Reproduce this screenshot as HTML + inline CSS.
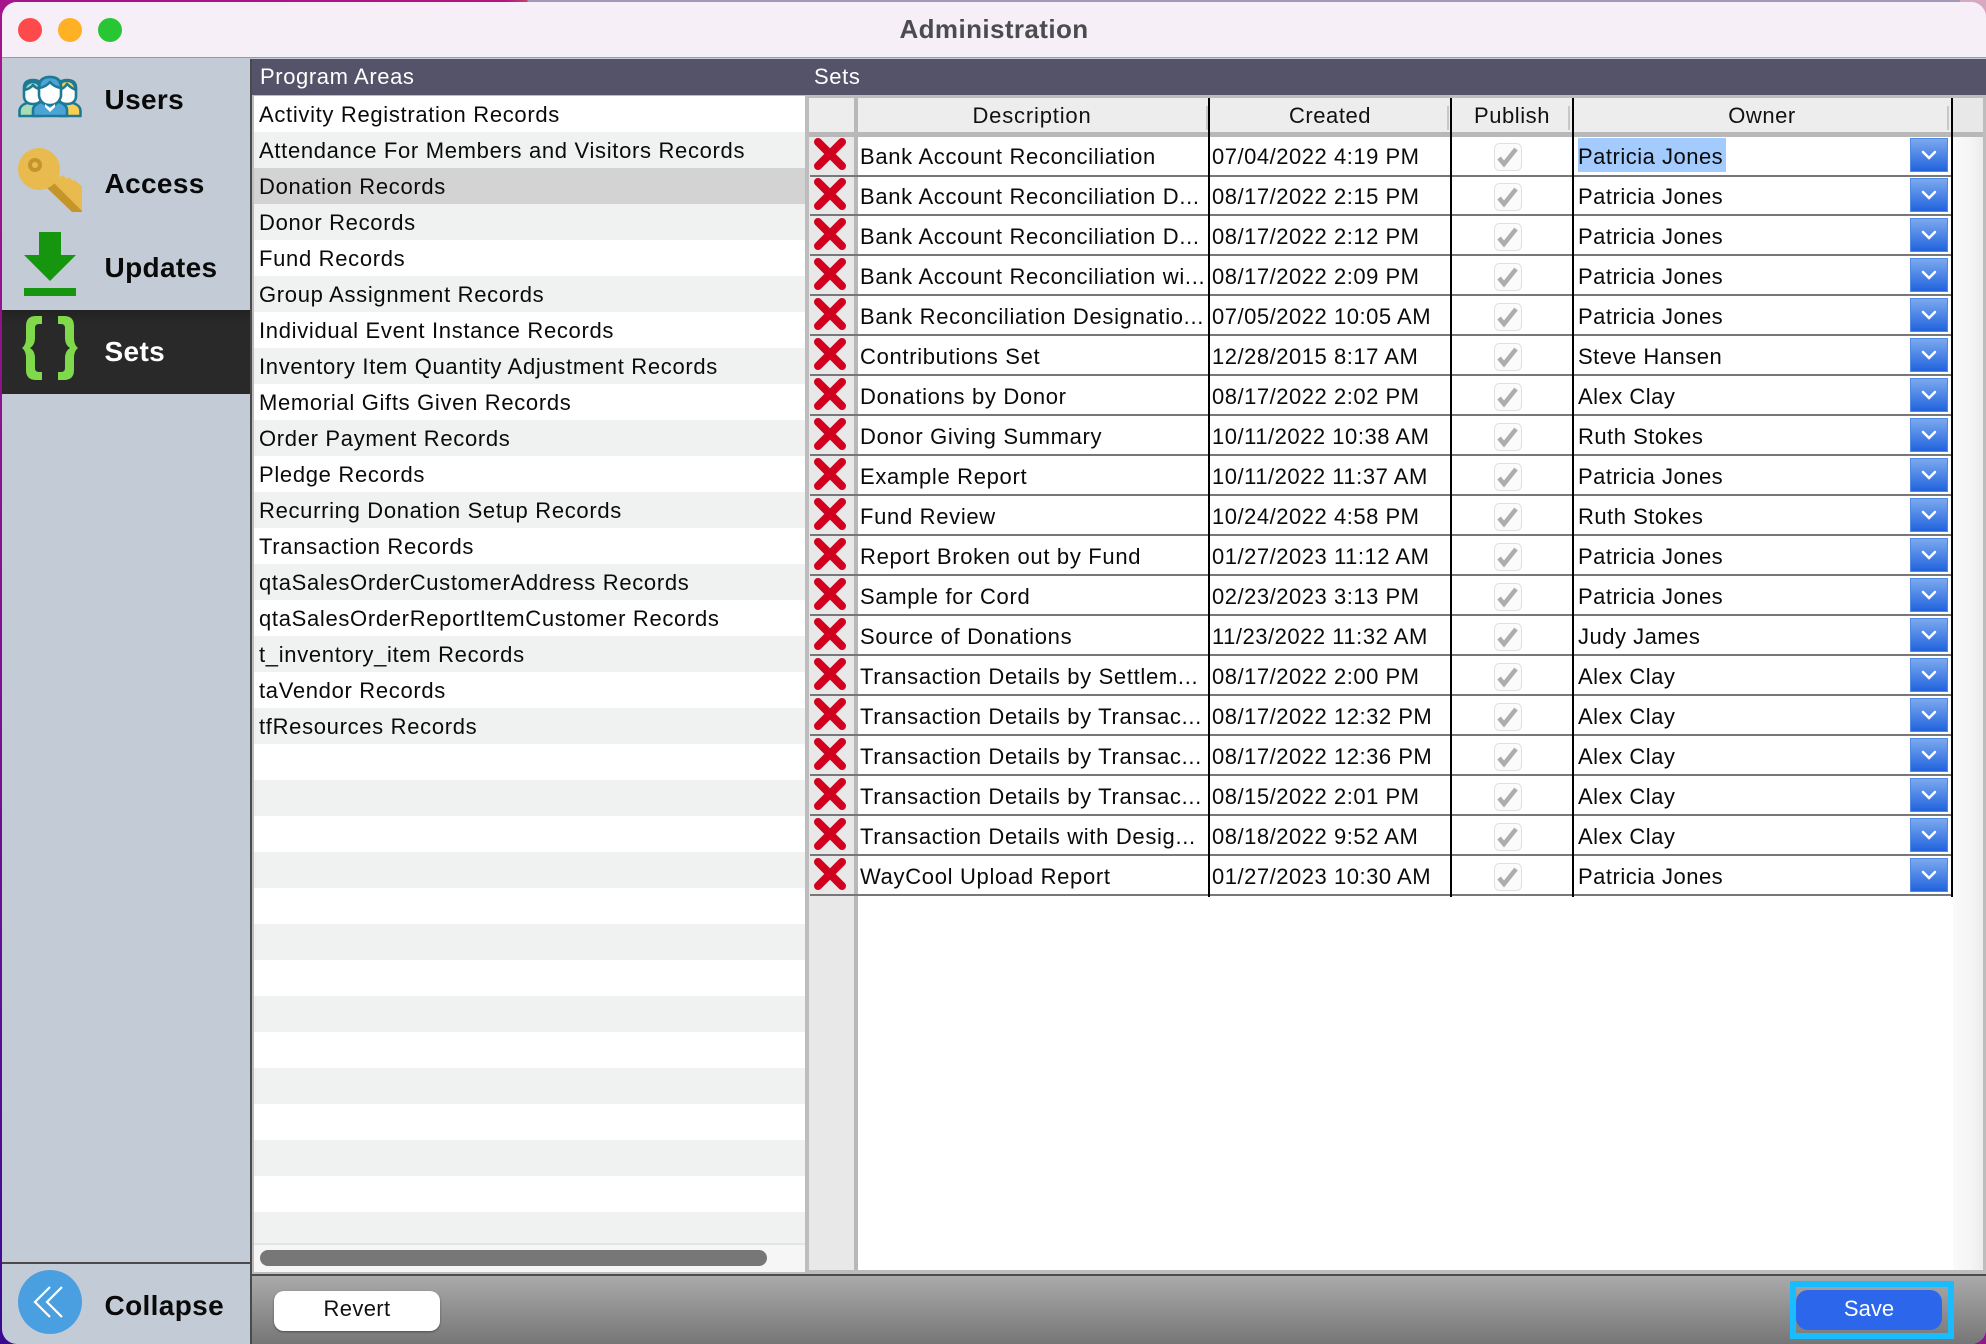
<!DOCTYPE html>
<html lang="en"><head><meta charset="utf-8"><title>Administration</title>
<style>
*{box-sizing:border-box}
html,body{margin:0;padding:0;width:1986px;height:1344px;overflow:hidden}
body{position:relative;font-family:"Liberation Sans",sans-serif;color:#0a0a0a;background:linear-gradient(180deg,#a5148a 0%,#7d1090 50%,#3a0a90 100%)}
.a{position:absolute}
#topband{left:0;top:0;width:1986px;height:2px;background:linear-gradient(90deg,#a5148a 0,#b01580 505px,#c04070 527px,#a09ab5 528px,#a09ab5 100%)}
#cornerR{left:1960px;top:0;width:26px;height:26px;background:#d8a8c0}
#cornerB{left:1950px;top:1310px;width:36px;height:34px;background:#8a1a8c}
#win{left:2px;top:2px;width:1984px;height:1342px;border-radius:15px;overflow:hidden;background:#c3ccd6}
#title{left:0;top:0;width:1984px;height:56px;background:#f6eff7;border-bottom:1px solid #9a98a0;text-align:center;font-weight:bold;font-size:26px;letter-spacing:.4px;line-height:54px;color:#4c4c4e}
.side{left:0;width:248px;height:84px}
.lbl{position:absolute;left:102.500px;top:0;line-height:84px;font-weight:bold;font-size:28px;letter-spacing:.35px;color:#0a0a0a}
#sep{left:248px;top:57px;width:2px;height:1285px;background:#4a4a4c}
#band{left:250px;top:57px;width:1734px;height:36px;background:#55536a}
.bt{position:absolute;top:0;line-height:35px;font-size:22px;letter-spacing:.6px;color:#fff}
#main{left:250px;top:93px;width:1734px;height:1179px;background:#bdbdbd}
#list{left:252px;top:94px;width:551px;height:1176px;background:#f5f6f5;overflow:hidden}
.lr{height:36px;line-height:38px;padding-left:5px;font-size:22px;letter-spacing:.68px;white-space:nowrap;background:#fff}
.lr.g{background:#f0f2f1}
.lr.s{background:#d3d3d3}
#lend{left:252px;top:1241px;width:551px;height:29px;background:#f6f6f6;border-top:2px solid #e4e4e4}
#thumb{left:258px;top:1248px;width:507px;height:16px;border-radius:8px;background:#777}
#table{left:807px;top:96px;width:1174px;height:1172px;background:#fff}
#delc{left:807px;top:96px;width:45px;height:1172px;background:#e8e8e8}
#dv{left:852px;top:96px;width:4px;height:1172px;background:#b8b8b8}
#hdr{left:807px;top:96px;width:1174px;height:34px;background:#ededed}
#hbar{left:807px;top:130px;width:1174px;height:5px;background:#b8b8b8}
#gut{left:1950px;top:96px;width:31px;height:34px;background:#e8e8e8}
#gut2{left:1951px;top:135px;width:30px;height:1133px;background:linear-gradient(90deg,#fafafa,#f5f5f5 60%,#ececec)}
.h{position:absolute;top:96px;height:34px;line-height:35px;text-align:center;font-size:22px;letter-spacing:.55px;color:#111}
.hs{position:absolute;top:104px;width:2px;height:24px;background:#c8c8c8}
.v{position:absolute;top:96px;width:2px;height:799px;background:#000}
.r{position:absolute;left:808px;width:1142px;height:40px;border-bottom:2px solid #777}
.x{position:absolute;left:4px;top:1px;width:32px;height:32px}
.t{position:absolute;top:0;line-height:39px;height:38px;font-size:22px;letter-spacing:.68px;white-space:nowrap;color:#0a0a0a}
.d{left:50px}.c{left:402px;letter-spacing:.52px}.o{left:768px;letter-spacing:.5px}
.ck{position:absolute;left:684px;top:6px;width:28px;height:28px}
.sl{position:absolute;left:768px;top:1px;width:148px;height:34px;background:#a4cbfd}
.dd{position:absolute;left:1100px;top:1px;width:38px;height:34px;background:linear-gradient(180deg,#7ca9ee,#2063dd);border:1px solid #4f8ae6}
.dd svg{position:absolute;left:10px;top:10px;width:16px;height:12px}
.r~.r .x{top:2px}.r~.r .t{top:1px}.r~.r .ck{top:7px}.r~.r .dd{top:2px}
#foot{left:250px;top:1272px;width:1734px;height:70px;background:linear-gradient(180deg,#aaa 0,#767676 100%);border-top:2px solid #4c4c4c}
#rev{left:272px;top:1289px;width:166px;height:40px;border-radius:10px;background:#fff;box-shadow:0 1px 2px rgba(0,0,0,.4);text-align:center;line-height:36px;font-size:22px;letter-spacing:.35px;color:#111}
#ring{left:1788px;top:1279px;width:164px;height:58px;border:6px solid #19bdff}
#save{left:1794px;top:1288px;width:146px;height:40px;border-radius:12px;background:#2b66eb;color:#fff;text-align:center;line-height:38px;font-size:22px}
#hl{left:0;top:1260px;width:248px;height:2px;background:#4a4a4c}
</style></head><body>
<svg width="0" height="0" style="position:absolute"><defs>
<symbol id="ix" viewBox="0 0 32 32"><path d="M4 4l24 24M28 4L4 28" stroke="#d2001f" stroke-width="8" stroke-linecap="round"/></symbol>
<symbol id="ic" viewBox="0 0 28 28"><rect x=".5" y=".5" width="27" height="27" rx="5" fill="#fbfbfb" stroke="#e0e0e0"/><path d="M5 15l5 6 12-15" fill="none" stroke="#adadad" stroke-width="4.500"/></symbol>
<symbol id="iv" viewBox="0 0 16 12"><path d="M2 3l6 6 6-6" fill="none" stroke="#fff" stroke-width="2.500" stroke-linecap="round"/></symbol>
</defs></svg>
<div class="a" id="topband"></div><div class="a" id="cornerR"></div><div class="a" id="cornerB"></div>
<div class="a" id="win">
<div class="a" id="title">Administration</div>
<svg class="a" style="left:14px;top:16px" width="110" height="26"><circle cx="14" cy="12" r="12" fill="#ff4a4b"/><circle cx="54" cy="12" r="12" fill="#ffb024"/><circle cx="94" cy="12" r="12" fill="#28c634"/></svg>

<div class="a side" style="top:56px"><div class="lbl">Users</div></div>
<div class="a side" style="top:140px"><div class="lbl">Access</div></div>
<div class="a side" style="top:224px"><div class="lbl">Updates</div></div>
<div class="a side" style="top:308px;background:linear-gradient(180deg,#222,#292929 14px)"><div class="lbl" style="color:#fff">Sets</div></div>

<svg class="a" style="left:16px;top:73px" width="64" height="44" viewBox="0 0 64 44">
<g stroke="#1d7a96" stroke-width="2.600" stroke-linejoin="round">
<path d="M1.500 41v-5c0-5 5-8 12-9l6 2 3 12z" fill="#a9dcb2"/>
<path d="M62.500 41v-5c0-5-5-8-12-9l-6 2-3 12z" fill="#f7cf55"/>
<path d="M6 13q0-8 9-8t9 8v9q-1 7-9 7t-9-7z" fill="#fff"/>
<path d="M6 15q2-8 9-8 6 0 9 8-7-2-9-5-3 4-9 5z" fill="#a9dcb2"/>
<path d="M40 13q0-8 9-8t9 8v9q-1 7-9 7t-9-7z" fill="#fff"/>
<path d="M40 15q6-1 9-6 4 4 9 6-2-10-9-9-7-1-9 9z" fill="#f7cf55"/>
<path d="M15 41v-6c0-5 6-8 12-9l5 3 5-3c6 1 12 4 12 9v6z" fill="#4ba3d6"/>
<path d="M21 12q0-10 11-10t11 10v9q-2 9-11 9t-11-9z" fill="#fff"/>
<path d="M21 13q0-11 11-11t11 11q-7-1-11-6-4 5-11 6z" fill="#4ba3d6"/>
</g>
<path d="M27 29l5 4 5-4v3l-5 5-5-5z" fill="#fff"/>
</svg>

<svg class="a" style="left:16px;top:146px" width="64" height="64" viewBox="0 0 64 64">
<path d="M33 33L39 26 43 29 45 27 49 31 51 29 55 33 57 32 61 36 64 38V64H54z" fill="#e9bb4e"/>
<path d="M29 40L35 34 64 63V64H54z" fill="#c4952b"/>
<circle cx="21" cy="21" r="21" fill="#e9bb4e"/>
<circle cx="17" cy="17" r="7" fill="#c4952b"/><circle cx="17" cy="17" r="3" fill="#e9bb4e"/>
</svg>

<svg class="a" style="left:22px;top:230px" width="52" height="66" viewBox="0 0 52 66">
<path d="M15 0h22v23h15L26 49 0 23h15z" fill="#16950f"/><rect x="0" y="56" width="52" height="8" fill="#16950f"/>
</svg>

<svg class="a" style="left:20px;top:314px" width="56" height="64" viewBox="0 0 56 64" fill="#7fd94a">
<path d="M20 0H14Q4 0 4 10V22Q4 29 0 32 4 35 4 42V54Q4 64 14 64H20V56H17Q13 56 13 52V42Q13 35 8 32 13 29 13 22V12Q13 8 17 8H20Z"/>
<path transform="translate(56 0) scale(-1 1)" d="M20 0H14Q4 0 4 10V22Q4 29 0 32 4 35 4 42V54Q4 64 14 64H20V56H17Q13 56 13 52V42Q13 35 8 32 13 29 13 22V12Q13 8 17 8H20Z"/>
</svg>

<div class="a" id="hl"></div>
<div class="a side" style="top:1262px"><div class="lbl">Collapse</div></div>
<svg class="a" style="left:16px;top:1268px" width="64" height="64" viewBox="0 0 64 64">
<circle cx="32" cy="32" r="32" fill="#4a9fe0"/>
<path d="M32 17L17 32l15 15M44 17L29 32l15 15" fill="none" stroke="#fff" stroke-width="2.200"/>
</svg>

<div class="a" id="sep"></div>
<div class="a" id="band"><div class="bt" style="left:8px">Program Areas</div><div class="bt" style="left:562px">Sets</div></div>
<div class="a" id="main"></div>

<div class="a" id="list">
<div class="lr">Activity Registration Records</div>
<div class="lr g">Attendance For Members and Visitors Records</div>
<div class="lr s">Donation Records</div>
<div class="lr g">Donor Records</div>
<div class="lr">Fund Records</div>
<div class="lr g">Group Assignment Records</div>
<div class="lr">Individual Event Instance Records</div>
<div class="lr g">Inventory Item Quantity Adjustment Records</div>
<div class="lr">Memorial Gifts Given Records</div>
<div class="lr g">Order Payment Records</div>
<div class="lr">Pledge Records</div>
<div class="lr g">Recurring Donation Setup Records</div>
<div class="lr">Transaction Records</div>
<div class="lr g">qtaSalesOrderCustomerAddress Records</div>
<div class="lr">qtaSalesOrderReportItemCustomer Records</div>
<div class="lr g">t_inventory_item Records</div>
<div class="lr">taVendor Records</div>
<div class="lr g">tfResources Records</div>
<div class="lr">&nbsp;</div><div class="lr g">&nbsp;</div><div class="lr">&nbsp;</div><div class="lr g">&nbsp;</div><div class="lr">&nbsp;</div><div class="lr g">&nbsp;</div><div class="lr">&nbsp;</div><div class="lr g">&nbsp;</div><div class="lr">&nbsp;</div><div class="lr g">&nbsp;</div><div class="lr">&nbsp;</div><div class="lr g">&nbsp;</div><div class="lr">&nbsp;</div><div class="lr g">&nbsp;</div>
</div>
<div class="a" id="lend"></div><div class="a" id="thumb"></div>

<div class="a" id="table"></div>
<div class="a" id="delc"></div><div class="a" id="hdr"></div><div class="a" id="gut"></div><div class="a" id="hbar"></div><div class="a" id="dv"></div><div class="a" id="gut2"></div>
<div class="h" style="left:855px;width:350px;letter-spacing:.82px">Description</div>
<div class="h" style="left:1208px;width:240px">Created</div>
<div class="h" style="left:1450px;width:120px">Publish</div>
<div class="h" style="left:1571px;width:378px">Owner</div>
<div class="hs" style="left:1204px"></div><div class="hs" style="left:1445px"></div><div class="hs" style="left:1566px"></div><div class="hs" style="left:1945px"></div>

<div class="r" style="top:135px"><svg class="x"><use href="#ix"/></svg><div class="t d">Bank Account Reconciliation</div><div class="t c">07/04/2022 4:19 PM</div><svg class="ck"><use href="#ic"/></svg><div class="sl"></div><div class="t o">Patricia Jones</div><div class="dd"><svg><use href="#iv"/></svg></div></div>
<div class="r" style="top:174px"><svg class="x"><use href="#ix"/></svg><div class="t d">Bank Account Reconciliation D...</div><div class="t c">08/17/2022 2:15 PM</div><svg class="ck"><use href="#ic"/></svg><div class="t o">Patricia Jones</div><div class="dd"><svg><use href="#iv"/></svg></div></div>
<div class="r" style="top:214px"><svg class="x"><use href="#ix"/></svg><div class="t d">Bank Account Reconciliation D...</div><div class="t c">08/17/2022 2:12 PM</div><svg class="ck"><use href="#ic"/></svg><div class="t o">Patricia Jones</div><div class="dd"><svg><use href="#iv"/></svg></div></div>
<div class="r" style="top:254px"><svg class="x"><use href="#ix"/></svg><div class="t d">Bank Account Reconciliation wi...</div><div class="t c">08/17/2022 2:09 PM</div><svg class="ck"><use href="#ic"/></svg><div class="t o">Patricia Jones</div><div class="dd"><svg><use href="#iv"/></svg></div></div>
<div class="r" style="top:294px"><svg class="x"><use href="#ix"/></svg><div class="t d">Bank Reconciliation Designatio...</div><div class="t c">07/05/2022 10:05 AM</div><svg class="ck"><use href="#ic"/></svg><div class="t o">Patricia Jones</div><div class="dd"><svg><use href="#iv"/></svg></div></div>
<div class="r" style="top:334px"><svg class="x"><use href="#ix"/></svg><div class="t d">Contributions Set</div><div class="t c">12/28/2015 8:17 AM</div><svg class="ck"><use href="#ic"/></svg><div class="t o">Steve Hansen</div><div class="dd"><svg><use href="#iv"/></svg></div></div>
<div class="r" style="top:374px"><svg class="x"><use href="#ix"/></svg><div class="t d">Donations by Donor</div><div class="t c">08/17/2022 2:02 PM</div><svg class="ck"><use href="#ic"/></svg><div class="t o">Alex Clay</div><div class="dd"><svg><use href="#iv"/></svg></div></div>
<div class="r" style="top:414px"><svg class="x"><use href="#ix"/></svg><div class="t d">Donor Giving Summary</div><div class="t c">10/11/2022 10:38 AM</div><svg class="ck"><use href="#ic"/></svg><div class="t o">Ruth Stokes</div><div class="dd"><svg><use href="#iv"/></svg></div></div>
<div class="r" style="top:454px"><svg class="x"><use href="#ix"/></svg><div class="t d">Example Report</div><div class="t c">10/11/2022 11:37 AM</div><svg class="ck"><use href="#ic"/></svg><div class="t o">Patricia Jones</div><div class="dd"><svg><use href="#iv"/></svg></div></div>
<div class="r" style="top:494px"><svg class="x"><use href="#ix"/></svg><div class="t d">Fund Review</div><div class="t c">10/24/2022 4:58 PM</div><svg class="ck"><use href="#ic"/></svg><div class="t o">Ruth Stokes</div><div class="dd"><svg><use href="#iv"/></svg></div></div>
<div class="r" style="top:534px"><svg class="x"><use href="#ix"/></svg><div class="t d">Report Broken out by Fund</div><div class="t c">01/27/2023 11:12 AM</div><svg class="ck"><use href="#ic"/></svg><div class="t o">Patricia Jones</div><div class="dd"><svg><use href="#iv"/></svg></div></div>
<div class="r" style="top:574px"><svg class="x"><use href="#ix"/></svg><div class="t d">Sample for Cord</div><div class="t c">02/23/2023 3:13 PM</div><svg class="ck"><use href="#ic"/></svg><div class="t o">Patricia Jones</div><div class="dd"><svg><use href="#iv"/></svg></div></div>
<div class="r" style="top:614px"><svg class="x"><use href="#ix"/></svg><div class="t d">Source of Donations</div><div class="t c">11/23/2022 11:32 AM</div><svg class="ck"><use href="#ic"/></svg><div class="t o">Judy James</div><div class="dd"><svg><use href="#iv"/></svg></div></div>
<div class="r" style="top:654px"><svg class="x"><use href="#ix"/></svg><div class="t d">Transaction Details by Settlem...</div><div class="t c">08/17/2022 2:00 PM</div><svg class="ck"><use href="#ic"/></svg><div class="t o">Alex Clay</div><div class="dd"><svg><use href="#iv"/></svg></div></div>
<div class="r" style="top:694px"><svg class="x"><use href="#ix"/></svg><div class="t d">Transaction Details by Transac...</div><div class="t c">08/17/2022 12:32 PM</div><svg class="ck"><use href="#ic"/></svg><div class="t o">Alex Clay</div><div class="dd"><svg><use href="#iv"/></svg></div></div>
<div class="r" style="top:734px"><svg class="x"><use href="#ix"/></svg><div class="t d">Transaction Details by Transac...</div><div class="t c">08/17/2022 12:36 PM</div><svg class="ck"><use href="#ic"/></svg><div class="t o">Alex Clay</div><div class="dd"><svg><use href="#iv"/></svg></div></div>
<div class="r" style="top:774px"><svg class="x"><use href="#ix"/></svg><div class="t d">Transaction Details by Transac...</div><div class="t c">08/15/2022 2:01 PM</div><svg class="ck"><use href="#ic"/></svg><div class="t o">Alex Clay</div><div class="dd"><svg><use href="#iv"/></svg></div></div>
<div class="r" style="top:814px"><svg class="x"><use href="#ix"/></svg><div class="t d">Transaction Details with Desig...</div><div class="t c">08/18/2022 9:52 AM</div><svg class="ck"><use href="#ic"/></svg><div class="t o">Alex Clay</div><div class="dd"><svg><use href="#iv"/></svg></div></div>
<div class="r" style="top:854px"><svg class="x"><use href="#ix"/></svg><div class="t d">WayCool Upload Report</div><div class="t c">01/27/2023 10:30 AM</div><svg class="ck"><use href="#ic"/></svg><div class="t o">Patricia Jones</div><div class="dd"><svg><use href="#iv"/></svg></div></div>
<div class="v" style="left:1206px"></div><div class="v" style="left:1448px"></div><div class="v" style="left:1570px"></div><div class="v" style="left:1949px"></div>

<div class="a" id="foot"></div>
<div class="a" id="rev">Revert</div>
<div class="a" id="ring"></div>
<div class="a" id="save">Save</div>
</div>
</body></html>
